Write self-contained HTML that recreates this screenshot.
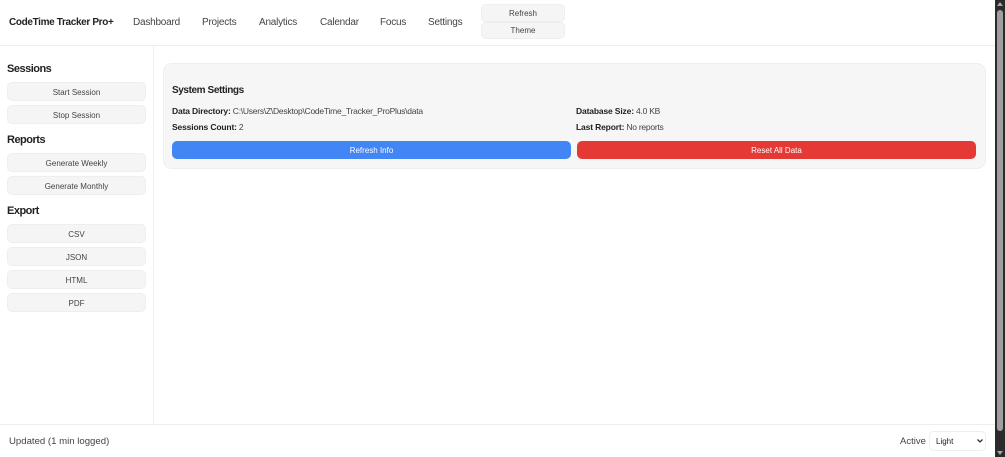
<!DOCTYPE html>
<html><head><meta charset="utf-8">
<style>
html,body{margin:0;padding:0;width:1005px;height:457px;overflow:hidden;background:#fff;font-family:"Liberation Sans",sans-serif;color:#222}
.a{position:absolute;white-space:nowrap}
.t{font-size:8.5px;line-height:14px;color:#444;letter-spacing:-.25px}
.nav{top:15px;font-size:10px;line-height:15px;color:#444;letter-spacing:-.22px}
.btn{position:absolute;box-sizing:border-box;background:#f5f5f5;border:1px solid #eee;border-radius:5px;text-align:center;font-size:8px;color:#444;white-space:nowrap}
.s{left:7px;width:139px;height:19px;line-height:19px}
h3{position:absolute;margin:0;left:7px;font-size:11px;line-height:14px;font-weight:700;color:#222;letter-spacing:-.5px}
b{color:#222;letter-spacing:-.15px}
</style></head><body>
<div class="a" style="left:0;top:45px;width:995px;height:1px;background:#eee"></div>
<div class="a" style="left:9px;top:15px;font-size:10px;line-height:15px;font-weight:700;color:#222;letter-spacing:-.35px">CodeTime Tracker Pro+</div>
<div class="a nav" style="left:133px">Dashboard</div>
<div class="a nav" style="left:202px">Projects</div>
<div class="a nav" style="left:259px">Analytics</div>
<div class="a nav" style="left:320px">Calendar</div>
<div class="a nav" style="left:380px">Focus</div>
<div class="a nav" style="left:428px">Settings</div>
<div class="btn" style="left:481px;top:4px;width:84px;height:18px;line-height:17px">Refresh</div>
<div class="btn" style="left:481px;top:22px;width:84px;height:17px;line-height:15px">Theme</div>

<div class="a" style="left:153px;top:46px;width:1px;height:378px;background:#eee"></div>
<h3 style="top:62px">Sessions</h3>
<div class="btn s" style="top:82px">Start Session</div>
<div class="btn s" style="top:105px">Stop Session</div>
<h3 style="top:133px">Reports</h3>
<div class="btn s" style="top:153px">Generate Weekly</div>
<div class="btn s" style="top:176px">Generate Monthly</div>
<h3 style="top:204px">Export</h3>
<div class="btn s" style="top:224px">CSV</div>
<div class="btn s" style="top:247px">JSON</div>
<div class="btn s" style="top:270px">HTML</div>
<div class="btn s" style="top:293px">PDF</div>

<div class="a" style="left:163px;top:63px;width:823px;height:106px;box-sizing:border-box;background:#f6f6f6;border:1px solid #efefef;border-radius:9px"></div>
<div class="a" style="left:172px;top:83px;font-size:10px;line-height:15px;font-weight:700;color:#222;letter-spacing:-.4px">System Settings</div>
<div class="a t" style="left:172px;top:104px"><b>Data Directory:</b> C:\Users\Z\Desktop\CodeTime_Tracker_ProPlus\data</div>
<div class="a t" style="left:172px;top:120px"><b>Sessions Count:</b> 2</div>
<div class="a t" style="left:576px;top:104px"><b>Database Size:</b> 4.0 KB</div>
<div class="a t" style="left:576px;top:120px"><b>Last Report:</b> No reports</div>
<div class="btn" style="left:172px;top:141px;width:399px;height:18px;line-height:19px;background:#4285f4;border:0;color:#fff">Refresh Info</div>
<div class="btn" style="left:577px;top:141px;width:399px;height:18px;line-height:19px;background:#e53935;border:0;color:#fff">Reset All Data</div>

<div class="a" style="left:0;top:424px;width:995px;height:1px;background:#eee"></div>
<div class="a" style="left:9px;top:435px;font-size:9.6px;line-height:14px;color:#444">Updated (1 min logged)</div>
<div class="a" style="left:900px;top:435px;font-size:9.5px;line-height:14px;color:#444">Active</div>
<div class="a" style="left:929px;top:431px;width:57px;height:20px;box-sizing:border-box;border:1px solid #eee;border-radius:5px;font-size:8px;line-height:19px;padding-left:6px;color:#222;background:#fff">Light
<svg style="position:absolute;left:47px;top:7px" width="6" height="4" viewBox="0 0 6 4"><path d="M0.5 0.5L3 3L5.5 0.5" fill="none" stroke="#333" stroke-width="1.3"/></svg></div>

<div class="a" style="left:995px;top:0;width:10px;height:457px;background:#2b2b2b"></div>
<div class="a" style="left:997px;top:10px;width:6px;height:421px;background:#9f9f9f;border-radius:3px"></div>
<svg class="a" style="left:995px;top:0" width="10" height="8" viewBox="0 0 10 8"><path d="M5 2L8 6H2Z" fill="#aaa"/></svg>
<svg class="a" style="left:995px;top:449px" width="10" height="8" viewBox="0 0 10 8"><path d="M5 6L8 2H2Z" fill="#aaa"/></svg>
</body></html>
